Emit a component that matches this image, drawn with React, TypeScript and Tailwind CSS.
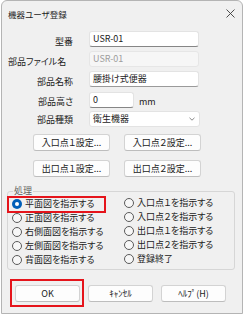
import React from 'react';

const Field = ({ label, left, children }: { label: string; left?: boolean; children: React.ReactNode }) => (
  <div className="flex items-start h-[16px] mb-[4px]">
    <div className={`w-[65px] pt-[3px] leading-[16px] whitespace-nowrap ${left ? 'text-left' : 'text-right'}`}>{label}</div>
    <div className="ml-[16px]">{children}</div>
  </div>
);

const Btn = ({ children, className = '' }: { children: React.ReactNode; className?: string }) => (
  <div
    className={`h-[17px] flex items-center justify-center bg-[#fdfdfd] border border-[#d3d3d3] border-b-[#bdbdbd] rounded-[3px] leading-none ${className}`}
  >
    {children}
  </div>
);

const Radio = ({ label, checked }: { label: string; checked?: boolean }) => (
  <div className="flex items-center h-[14px] gap-[3px] whitespace-nowrap">
    {checked ? (
      <span className="w-[10px] h-[10px] rounded-full bg-[#005fb8] flex items-center justify-center">
        <span className="w-[4px] h-[4px] rounded-full bg-white" />
      </span>
    ) : (
      <span className="w-[10px] h-[10px] rounded-full bg-[#f7f7f7] border border-[#5a5a5a]" />
    )}
    <span>{label}</span>
  </div>
);

export default function App() {
  const leftItems = ['平面図を指示する', '正面図を指示する', '右側面図を指示する', '左側面図を指示する', '背面図を指示する'];
  const rightItems = ['入口点１を指示する', '入口点２を指示する', '出口点１を指示する', '出口点２を指示する', '登録終了'];

  return (
    <div className="w-[246px] h-[316px] bg-white font-['Noto_Sans_CJK_JP','Noto_Sans',sans-serif] [font-feature-settings:'palt'] text-[9px] text-[#1b1b1b]">
      <div className="ml-px w-[242px] h-[314px] border border-[#b4b4b4] rounded-t-[6px] bg-[#f0f0f0] flex flex-col">
        {/* title bar */}
        <div className="h-[25px] flex items-center justify-between pl-[6px] pr-[6px] shrink-0">
          <span className="text-[8.5px] pt-[1px]">機器ユーザ登録</span>
          <svg width="9" height="9" viewBox="0 0 9 9" className="mr-[1px]">
            <path d="M0.5 0.5 L8.5 8.5 M8.5 0.5 L0.5 8.5" stroke="#3a3a3a" strokeWidth="0.9" fill="none" />
          </svg>
        </div>

        <div className="pl-[6px] pt-[5px] flex flex-col">
          <Field label="型番">
            <div className="w-[110px] h-[16px] bg-white border border-[#e3e3e3] border-b-[#868686] rounded-[3px] px-[3px] leading-[14px]">USR-01</div>
          </Field>
          <Field label="部品ファイル名" left>
            <div className="w-[110px] h-[16px] bg-[#f6f6f6] border border-[#e6e6e6] rounded-[3px] px-[3px] leading-[14px] text-[#9d9d9d]">USR-01</div>
          </Field>
          <Field label="部品名称">
            <div className="w-[110px] h-[16px] bg-white border border-[#e3e3e3] border-b-[#9a9a9a] rounded-[3px] px-[3px] leading-[14px]">腰掛け式便器</div>
          </Field>
          <Field label="部品高さ">
            <div className="flex items-center">
              <div className="w-[45px] h-[16px] bg-white border border-[#e3e3e3] border-b-[#868686] rounded-[3px] px-[3px] leading-[14px]">0</div>
              <span className="ml-[5px] pt-[4px]">mm</span>
            </div>
          </Field>
          <div className="flex items-start h-[16px]">
            <div className="w-[65px] leading-[16px] pt-[1px] text-right">部品種類</div>
            <div className="ml-[16px] w-[111px] h-[16px] bg-white border border-[#e3e3e3] rounded-[3px] px-[3px] leading-[14px] flex items-center justify-between">
              <span>衛生機器</span>
              <svg width="6" height="4" viewBox="0 0 6 4" className="mr-[1px]">
                <path d="M0.5 0.8 L3 3.2 L5.5 0.8" stroke="#6b6b6b" strokeWidth="0.8" fill="none" />
              </svg>
            </div>
          </div>

          <div className="flex gap-[14px] ml-[25px] mt-[7px]">
            <Btn className="w-[77px]">入口点１設定...</Btn>
            <Btn className="w-[77px]">入口点２設定...</Btn>
          </div>
          <div className="flex gap-[14px] ml-[25px] mt-[9px]">
            <Btn className="w-[77px]">出口点１設定...</Btn>
            <Btn className="w-[77px]">出口点２設定...</Btn>
          </div>

          <fieldset className="-ml-px mt-[8px] w-[228px] h-[85px] border border-[#d6d6d6] rounded-[3px]">
            <legend className="ml-[5px] px-[1px] leading-[12px] text-[#5f5f5f]">処理</legend>
            <div className="flex">
              <div className="w-[116px] pl-[4px] flex flex-col">
                {leftItems.map((t, i) =>
                  i === 0 ? (
                    <div key={t} className="relative">
                      <Radio label={t} checked />
                      <span className="absolute -left-[5px] -top-[1px] w-[99px] h-[17px] border-2 border-[#e5141b]" />
                    </div>
                  ) : (
                    <Radio key={t} label={t} />
                  )
                )}
              </div>
              <div className="flex flex-col -mt-[1px]">
                {rightItems.map(t => (
                  <Radio key={t} label={t} />
                ))}
              </div>
            </div>
          </fieldset>

          <div className="flex gap-[8px] ml-[7px] mt-[15px]">
            <div className="relative">
              <Btn className="w-[65px] border-[#0f67c0] border-b-[#0f67c0]">OK</Btn>
              <span className="absolute -left-[5px] -right-[4px] -top-[6px] -bottom-[5px] border-2 border-[#e5141b]" />
            </div>
            <Btn className="w-[65px]">ｷｬﾝｾﾙ</Btn>
            <Btn className="w-[65px]">ﾍﾙﾌﾟ(H)</Btn>
          </div>
        </div>
      </div>
    </div>
  );
}
